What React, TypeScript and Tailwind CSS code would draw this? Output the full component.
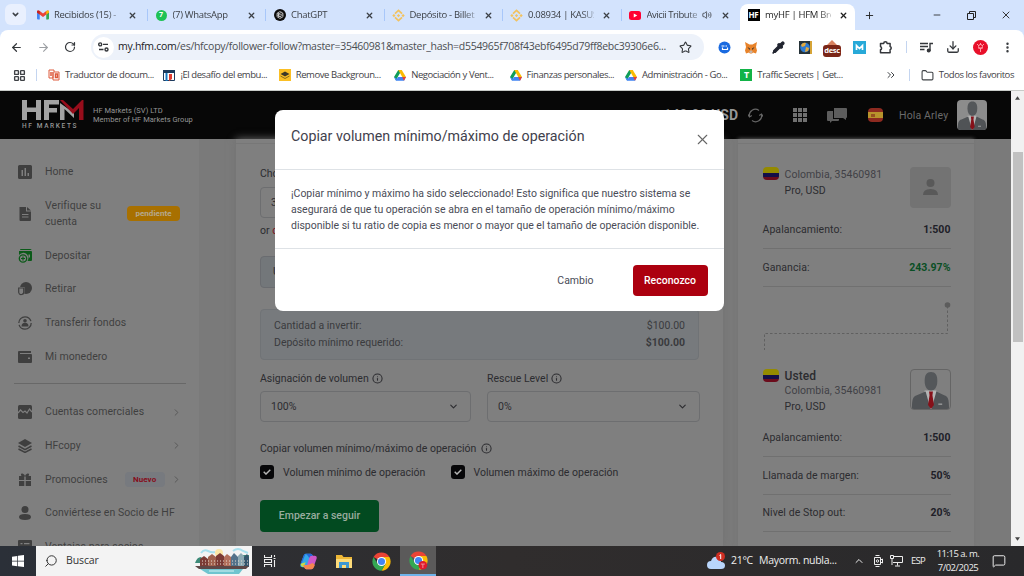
import { ReactNode } from "react";
import {
  ArrowLeft, ArrowRight, ChevronDown, ChevronRight, ChevronUp, ChevronsRight, Download, Folder, Info,
  LayoutGrid, MessageSquare, Minus, MoreVertical, Pipette, Plus, RotateCw, Search, Star, Volume2, X,
} from "lucide-react";

/* ---------- small logos ---------- */

function Gmail() {
  return (
    <svg width="12" height="10" viewBox="0 0 24 18">
      <path d="M0 2v14q0 2 2 2h3.500V7z" fill="#4285f4" />
      <path d="M24 2v14q0 2-2 2h-3.500V7z" fill="#34a853" />
      <path d="M0 2.500C0 0 3-1 5.500 1L12 6l6.500-5C21-1 24 0 24 2.500V4l-12 9L0 4z" fill="#ea4335" />
      <path d="M18.500 1v7L24 4V2.500C24 0 21-1 18.500 1z" fill="#fbbc04" />
      <path d="M5.500 1v7L0 4V2.500C0 0 3-1 5.500 1z" fill="#c5221f" />
    </svg>
  );
}

function Binance() {
  return (
    <svg width="13" height="13" viewBox="0 0 24 24" fill="none" stroke="#f2c260" strokeWidth="3.200">
      <path d="m5.500 8.500 6.500-6 6.500 6M5.500 15.500l6.500 6 6.500-6" />
      <path d="m12 9 3 3-3 3-3-3z" fill="#f2c260" stroke="none" />
      <path d="m3.500 9 3 3-3 3-3-3zM20.500 9l3 3-3 3-3-3z" fill="#f2c260" stroke="none" />
    </svg>
  );
}

function Drive() {
  return (
    <svg width="12" height="11" viewBox="0 0 24 22">
      <path d="M8.500 0h7L8 13 4.200 21 0 14z" fill="#0f9d58" />
      <path d="M8.500 0h7L24 14h-7.500z" fill="#fbbc04" />
      <path d="M0 14 4 21.500h16L24 14H8l-2 3.500z" fill="#4285f4" />
      <path d="M16.500 14H24l-4 7.500z" fill="#ea4335" />
    </svg>
  );
}

function Chrome({ badge }: { badge?: boolean }) {
  return (
    <svg width="19" height="19" viewBox="0 0 24 24">
      <path d="M12 12 2 6.200A11.600 11.600 0 0 1 22 6.200z" fill="#ea4335" />
      <path d="M12 12V6.200h10A11.600 11.600 0 0 1 12 23.600l5-8.700z" fill="#fbbc04" />
      <path d="M12 12 17 15l-5 8.600A11.600 11.600 0 0 1 2 6.200l5 8.700z" fill="#34a853" />
      <circle cx="12" cy="12" r="5.800" fill="#fff" />
      <circle cx="12" cy="12" r="4.500" fill="#4285f4" />
      {badge && (
        <>
          <circle cx="17.500" cy="18" r="5.500" fill="#e01b2c" />
          <path d="M15 16.500h5M17.500 16.500v5" stroke="#f7a5ac" strokeWidth="1" />
        </>
      )}
    </svg>
  );
}

function Swirl() {
  return (
    <svg width="12" height="12" viewBox="0 0 24 24">
      <circle cx="12" cy="12" r="12" fill="#0c0c0c" />
      <g fill="none" stroke="#d0d0d0" strokeWidth="1.500">
        <path d="m12 5 6 3.500v7L12 19l-6-3.500v-7z" />
        <path d="M9 6.500v7l6 3.500M15 6.500l-6 3.700v7M6 12l6 3.500 6-3.700M6 9l6 3 6-3" />
      </g>
    </svg>
  );
}

function Youtube() {
  return (
    <svg width="12" height="9" viewBox="0 0 24 18">
      <rect width="24" height="18" rx="5" fill="#f03" />
      <path d="m9.500 5 7 4-7 4z" fill="#fff" />
    </svg>
  );
}

/* ---------- browser chrome ---------- */

const tabs: { title: string; icon: ReactNode; audio?: boolean; active?: boolean }[] = [
  { title: "Recibidos (15) -", icon: <Gmail /> },
  {
    title: "(7) WhatsApp",
    icon: <span className="flex h-[11px] w-[11px] items-center justify-center rounded-full bg-[#1fc255] text-[7px] font-bold text-white">7</span>,
  },
  { title: "ChatGPT", icon: <Swirl /> },
  { title: "Depósito - Billet", icon: <Binance /> },
  { title: "0.08934 | KASUS", icon: <Binance /> },
  { title: "Avicii Tribute", icon: <Youtube />, audio: true },
  {
    title: "myHF | HFM Bro",
    icon: <span className="flex h-3 w-3 items-center justify-center bg-black text-[8px] font-bold tracking-[-0.300px] text-white">HF</span>,
    active: true,
  },
];

function TabStrip() {
  return (
    <div className="flex h-[30px] items-stretch bg-[#d3e3fd] text-[#3c4046]">
      <div className="w-[29px] pl-[5px] pt-1">
        <div className="flex h-[21px] w-[21px] items-center justify-center rounded-md bg-[#e9f0fe]">
          <ChevronDown size={9} strokeWidth={4} />
        </div>
      </div>
      {tabs.map((tab, i) => (
        <div
          key={tab.title}
          className={tab.active ? "flex w-[118px] pt-1" : "flex w-[118.500px] pt-1"}
        >
          <div
            className={
              tab.active
                ? "flex w-[115px] items-center rounded-t-lg bg-white pb-1 pl-[7px] text-[#1f1f1f]"
                : "flex w-full items-center pb-1 pl-[7px]"
            }
          >
            <span className="flex w-[13px] shrink-0 justify-center">{tab.icon}</span>
            <span
              className={
                tab.audio
                  ? "ml-[5px] w-[50px] whitespace-nowrap text-[9.500px] tracking-[-0.450px] [mask-image:linear-gradient(to_right,#000_80%,transparent_115%)]"
                  : "ml-[5px] w-[66px] whitespace-nowrap text-[9.500px] tracking-[-0.300px] [mask-image:linear-gradient(to_right,#000_80%,transparent_110%)]"
              }
            >
              {tab.title}
            </span>
            {tab.audio && <Volume2 size={10} className="ml-[5px] mr-px" />}
            <X size={9} strokeWidth={3.500} className="ml-2 shrink-0" />
          </div>
          {!tab.active && i !== 5 && <div className="mt-[5px] h-3 w-px bg-[#a8c7fa]" />}
        </div>
      ))}
      <div className="flex flex-1 items-center text-[#222]">
        <Plus size={11} className="ml-[6px]" />
        <Minus size={10} strokeWidth={2} className="ml-[57px]" />
        <svg className="ml-[25px]" width="9" height="9" viewBox="0 0 9 9" fill="none" stroke="currentColor">
          <path d="M.5 2.500h6v6h-6zM2.500 2.500v-2h6v6h-2" />
        </svg>
        <X size={12} strokeWidth={1.800} className="ml-[24px]" />
      </div>
    </div>
  );
}

const extensions: ReactNode[] = [
  <svg width="13" height="13" viewBox="0 0 13 13">
    <circle cx="6.500" cy="6.500" r="6" fill="#1a6ae0" />
    <path d="M3.500 5h3M9 5H7.500M9.500 6.500v2h-5v-2" fill="none" stroke="#fff" strokeWidth="1.200" />
  </svg>,
  <svg width="14" height="13" viewBox="0 0 28 26">
    <path d="m2 2 9 5h6l9-5-2 10 2 7-2 6-6-2-2 2h-4l-2-2-6 2-2-6 2-7z" fill="#e8832a" />
    <path d="m7 12 5 3-1 3zM21 12l-5 3 1 3z" fill="#35302c" />
    <path d="m11 21 1-2h4l1 2-1 3h-4z" fill="#c6b3a4" />
  </svg>,
  <Pipette size={13} fill="#20242f" color="#20242f" strokeWidth={2.500} />,
  <svg width="13" height="13" viewBox="0 0 13 13">
    <rect width="13" height="13" fill="#263238" />
    <circle cx="6" cy="6.500" r="4.800" fill="#2f7bd1" />
    <path d="M2 4q2-3 5-2l-1 3-3 1zM7 6l3 1-1 3-3 1z" fill="#e5a93a" />
    <path d="M11 0h2v13h-2z" fill="#d6a437" />
  </svg>,
  <span className="flex flex-col items-center pt-[3px]">
    <svg width="12" height="5" viewBox="0 0 12 6"><path d="m6 0 6 6H0z" fill="#d9825f" /></svg>
    <span className="flex h-[12px] w-[18px] items-center justify-center rounded-[3px] bg-[#7b2617] pb-px text-[7.500px] font-bold leading-none tracking-[-0.300px] text-white">desc</span>
  </span>,
  <svg width="13" height="13" viewBox="0 0 13 13">
    <rect width="13" height="13" fill="#27a9d8" />
    <path d="M3.500 9V4.500l3 3 3-3V9" fill="none" stroke="#fff" strokeWidth="1.700" />
  </svg>,
  <svg width="14" height="14" viewBox="0 0 14 14" fill="none" stroke="currentColor" strokeWidth="1.500" strokeLinejoin="round">
    <path d="M1.500 3.500h3.200a1.700 1.700 0 0 1 3.400 0h3v3a1.700 1.700 0 0 1 0 3.200v3H1.500V9.800a1.800 1.800 0 0 0 0-3.300z" />
  </svg>,
];

function Toolbar() {
  return (
    <div className="flex h-[34px] items-center rounded-t-lg bg-white text-[#34373b]">
      <ArrowLeft size={13} strokeWidth={2.200} className="ml-[10px]" />
      <ArrowRight size={13} className="ml-[14px] text-[#9c9fa3]" />
      <RotateCw size={12} strokeWidth={2.400} className="ml-[14px]" />
      <div className="ml-[15px] flex h-[26px] w-[613px] items-center rounded-full bg-[#edf2fa] pl-[2px]">
        <span className="flex h-[21px] w-[21px] shrink-0 items-center justify-center rounded-full bg-white">
          <svg width="11" height="10" viewBox="0 0 11 10" fill="none" stroke="currentColor" strokeWidth="1.400">
            <circle cx="2.200" cy="2.400" r="1.500" />
            <path d="M5 2.400h5M1 7.500h4.500" />
            <circle cx="8.500" cy="7.500" r="1.500" />
          </svg>
        </span>
        <span className="ml-1 w-[549px] shrink-0 whitespace-nowrap text-[10.500px] tracking-[-0.280px] text-[#4b4e52]">
          <span className="text-[#202124]">my.hfm.com</span>
          /es/hfcopy/follower-follow?master=35460981&amp;master_hash=d554965f708f43ebf6495d79ff8ebc39306e6...
        </span>
        <Star size={13} className="ml-[12px] shrink-0" />
      </div>
      <div className="ml-[6.500px] flex">
        {extensions.map((icon, i) => (
          <span key={i} className="flex h-5 w-[27px] items-center justify-center">{icon}</span>
        ))}
      </div>
      <div className="ml-[6px] mr-[6px] h-3 w-px bg-[#c4d5f0]" />
      <span className="flex w-[27px] justify-center">
        <svg width="13" height="11" viewBox="0 0 13 11" fill="none" stroke="currentColor" strokeWidth="1.400">
          <path d="M0 1.500h8M0 4.500h8M0 7.500h4.500M10 9V1.500h3" />
          <circle cx="8.700" cy="8.600" r="1.300" fill="currentColor" />
        </svg>
      </span>
      <span className="flex w-[27px] justify-center"><Download size={14} strokeWidth={2.200} /></span>
      <span className="flex w-[27px] justify-center">
        <svg width="15" height="15" viewBox="0 0 15 15">
          <circle cx="7.500" cy="7.500" r="7.500" fill="#e8102a" />
          <path d="M7.500 12V8M5 8h5M4 4l2 2M11 4 9 6M7.500 3v2" stroke="#ff9aa4" />
          <circle cx="7.500" cy="6.500" r="2" fill="none" stroke="#ff9aa4" />
        </svg>
      </span>
      <span className="flex w-[27px] justify-center"><MoreVertical size={13} strokeWidth={2.500} /></span>
    </div>
  );
}

const bookmarks: { title: string; icon: ReactNode }[] = [
  {
    title: "Traductor de docum...",
    icon: (
      <svg width="12" height="12" viewBox="0 0 12 12" fill="none" stroke="#dd5a3c">
        <path d="M1 1h5v2h5v8H5V9H1z" />
        <path d="M3 3v4M5 3v6M7.500 5h2v3.500h-2z" strokeWidth="1.500" />
      </svg>
    ),
  },
  {
    title: "¡El desafío del embu...",
    icon: (
      <svg width="12" height="11" viewBox="0 0 12 11">
        <path d="M.5.5h11v10H.5z" fill="#fff" stroke="#1c3b5e" />
        <path d="M0 0h12v3H0z" fill="#1c3b5e" />
        <path d="M2.500 3h2v8h-2z" fill="#1878c0" />
        <path d="M6 4h3v5l-3 2z" fill="#e03c31" />
      </svg>
    ),
  },
  {
    title: "Remove Backgroun...",
    icon: (
      <svg width="12" height="12" viewBox="0 0 12 12">
        <path d="M0 0h12v12H0z" fill="#fbbf24" />
        <path d="m6 2.500 4.500 2.500L6 7.500 1.500 5z" fill="#3c3828" />
        <path d="m1.500 7 4.500 2.500L10.500 7" fill="none" stroke="#8a6d1c" />
      </svg>
    ),
  },
  { title: "Negociación y Vent...", icon: <Drive /> },
  { title: "Finanzas personales...", icon: <Drive /> },
  { title: "Administración - Go...", icon: <Drive /> },
  {
    title: "Traffic Secrets | Get...",
    icon: <span className="flex h-3 w-3 items-center justify-center bg-[#12b347] text-[9px] font-bold text-white">T</span>,
  },
];

function Bookmarks() {
  return (
    <div className="flex h-[26px] items-center bg-white pb-1 text-[9.500px] tracking-[-0.430px] text-[#3f4246]">
      <LayoutGrid size={13} strokeWidth={2.500} className="ml-[13px]" />
      <div className="ml-[10px] mr-[11px] h-3 w-px bg-[#c4d5f0]" />
      {bookmarks.map((b) => (
        <div key={b.title} className="flex w-[115.400px] items-center gap-[5px] whitespace-nowrap">
          <span className="flex w-3 shrink-0 justify-center">{b.icon}</span>
          {b.title}
        </div>
      ))}
      <ChevronsRight size={12} className="ml-[29px]" />
      <div className="ml-[12px] mr-[11px] h-3 w-px bg-[#c4d5f0]" />
      <Folder size={13} />
      <span className="ml-[5px] whitespace-nowrap">Todos los favoritos</span>
    </div>
  );
}

/* ---------- page ---------- */

function Person({ className }: { className: string }) {
  return (
    <svg className={className} viewBox="0 0 40 40">
      <path d="M14 21h12l1 19H13z" fill="#b4b4b4" />
      <path d="M14 11c0-6 2-9 6.500-9S27 5 27 11c0 7-3 10-6.500 10S14 18 14 11z" fill="#54575a" />
      <path d="M15 22 20 40H1c0-10 1-13 5-14zM26 22l-5 18h18c0-10-1-13-5-14z" fill="#505356" />
      <path d="m18.500 22h4l-.5 4 1.500 10-3 4-3-4L19 26z" fill="#861019" />
      <path d="M28 35h4" stroke="#bbb" />
    </svg>
  );
}

function Header() {
  return (
    <header className="flex h-12 items-center bg-[#070707] text-[#969696]">
      <div className="ml-[22px] w-[64px]">
        <svg width="62" height="20" viewBox="0 0 62 20">
          <path d="M0 0h5v7.500h9V0h5v20h-5v-8H5v8H0zM22 0h15v4.500H27V8h8v4.500h-8V20h-5z" fill="#a2a2a2" />
          <path d="M38 3v17h4.500V9L52 18V13z" fill="#a2a2a2" />
          <path d="M38 0h3l10 9L60 0h1.500v20H57V8l-6 6z" fill="#970d1b" />
        </svg>
        <div className="mt-[3px] whitespace-nowrap text-[6.500px] font-medium leading-[7px] tracking-[1.650px]">HF MARKETS</div>
      </div>
      <div className="ml-[7px] w-[200px] whitespace-nowrap text-[7.500px] leading-[9px] tracking-[0.030px]">
        HF Markets (SV) LTD
        <br />
        Member of HF Markets Group
      </div>
      <div className="ml-auto flex items-center">
        <span className="whitespace-nowrap text-[14px] font-bold">140.00 USD</span>
        <svg className="ml-[10px]" width="15" height="15" viewBox="0 0 15 15" fill="none" stroke="#666" strokeWidth="1.200">
          <path d="M1.500 8.500A6 6 0 0 1 11 2.500M13.500 6.500A6 6 0 0 1 4 12.500M0 6.500l1.500 2.500 2.300-1.500M15 8.500 13.500 6l-2.300 1.500" />
        </svg>
        <svg className="ml-[30px]" width="14" height="14" viewBox="0 0 14 14" fill="#707070">
          <path d="M0 0h4v4H0zM5 0h4v4H5zM10 0h4v4h-4zM0 5h4v4H0zM5 5h4v4H5zM10 5h4v4h-4zM0 10h4v4H0zM5 10h4v4H5zM10 10h4v4h-4z" />
        </svg>
        <svg className="ml-[20px]" width="20" height="15" viewBox="0 0 20 15" fill="#5d5d5d">
          <path d="M7 0h12q1 0 1 1v8q0 1-1 1v2l-3-2H7z" />
          <path d="M1 3h5v8h6v1q0 1-1 1H5l-2 2v-2H1q-1 0-1-1V4q0-1 1-1z" />
        </svg>
        <div className="ml-[21px] flex h-[14px] w-[15px] flex-col overflow-hidden rounded-sm">
          <div className="h-1 bg-[#8d2a20]" />
          <div className="flex flex-1 items-center bg-[#b8932c] pl-[3px]"><div className="h-[3px] w-1 bg-[#96521f]" /></div>
          <div className="h-1 bg-[#8d2a20]" />
        </div>
        <span className="ml-4 w-[51px] whitespace-nowrap pt-px text-[10.500px] tracking-[0.150px] text-[#6a6a6a]">Hola Arley</span>
        <Person className="ml-[7px] mr-[24px] h-[30px] w-[30px] rounded bg-[#8c8c8c]" />
      </div>
    </header>
  );
}

function SideIcon({ name }: { name: string }) {
  const paths: Record<string, ReactNode> = {
    home: <path fillRule="evenodd" d="M1.500 0h11q1.500 0 1.500 1.500v11q0 1.500-1.500 1.500h-11Q0 14 0 12.500v-11Q0 0 1.500 0zM3.500 5v6H5V5zM6.500 3v8H8V3zM9.500 8v3H11V8z" />,
    doc: <path fillRule="evenodd" d="M1.500 0H8v4.500h5V13q0 1-1 1H2.500q-1 0-1-1zM9 0l4 3.500H9zM4 7v1h6.500V7zM4 9.500v1h6.500v-1z" />,
    deposit: (
      <g fill="#0b5a19">
        <path d="M3 0h9q1.500 0 1.500 1H2q0-1 1-1zM1 2h12q1 0 1 1v8q0 1-1 1H9.500A4.600 4.600 0 0 0 1 6z" />
        <circle cx="5" cy="9.500" r="3.700" fill="#7f7f7f" stroke="#0b5a19" strokeWidth="1.300" />
        <path d="M4.400 7.500h1.200v1.400H7v1.200H5.600v1.400H4.400v-1.400H3V8.900h1.400z" />
        <path d="M10.500 5.500H12v3h-1.500z" fill="#7f7f7f" />
      </g>
    ),
    withdraw: (
      <>
        <circle cx="8" cy="6" r="6" />
        <path d="M0 5h6.500v5A3.200 3.200 0 0 1 0 10z" fill="#7f7f7f" />
        <path d="M.7 6h5v3.500a2.500 2.500 0 0 1-5 1z" fill="none" stroke="#3f3f3f" strokeWidth="1.200" />
      </>
    ),
    transfer: (
      <>
        <circle cx="7" cy="7" r="6.200" fill="none" stroke="#3f3f3f" strokeWidth="1.300" strokeDasharray="17 2" />
        <circle cx="7" cy="4.800" r="1.800" />
        <path d="M3.500 10.500q0-3.700 3.500-3.700t3.500 3.700z" />
      </>
    ),
    wallet: <path fillRule="evenodd" d="M1 1h12v2H2v1h11q1 0 1 1v7q0 1-1 1H1q-1 0-1-1V2q0-1 1-1zM10 7.500V9h2V7.500z" />,
    chart: (
      <>
        <rect width="14" height="14" rx="1.500" />
        <path d="m0 8 2.500-3L5 7.500l2-1.500 2 2 2.500-4L14 7" fill="none" stroke="#7f7f7f" strokeWidth="1.200" />
      </>
    ),
    layers: (
      <>
        <path d="m7 0 7 4-7 4-7-4z" />
        <path d="m.5 7 6.500 3.600L13.500 7M.5 10 7 13.400 13.500 10" fill="none" stroke="#3f3f3f" strokeWidth="1.500" />
      </>
    ),
    gift: <path d="M1 3h2.500Q2 0 4.500.5 6.500 1 7 3q.5-2 2.500-2.500Q12 0 10.500 3H13v4H7.700V3.500H6.300V7H1zM1 8h5.300v5H1zM7.700 8H13v5H7.700z" />,
    user: (
      <>
        <circle cx="7" cy="3.500" r="3.500" />
        <path d="M1 11q0-3 6-3t6 3q0 3-6 3t-6-3z" />
      </>
    ),
    news: <path fillRule="evenodd" d="M1 0h12q1 0 1 1v12H0V1q0-1 1-1zM2.500 3v1.200h2V3zM6 3v1.200h5.500V3zM2.500 6v1h9V6z" />,
  };
  return <svg width="14" height="14" viewBox="0 0 14 14" fill="#3f3f3f" className="shrink-0">{paths[name]}</svg>;
}

function SideItem({ icon, label, arrow, badge }: { icon: string; label: string; arrow?: boolean; badge?: string }) {
  return (
    <div className="flex h-[33.700px] shrink-0 items-center pl-[18px]">
      <SideIcon name={icon} />
      <span className="ml-[13px] whitespace-nowrap">{label}</span>
      {badge && (
        <span className="ml-[17px] flex h-[15px] w-10 items-center justify-center rounded bg-[#777a7f] text-[8px] font-bold text-[#860d1b]">
          {badge}
        </span>
      )}
      {arrow && <ChevronRight size={11} className="ml-auto mr-[17px] text-[#555]" />}
    </div>
  );
}

function Sidebar() {
  return (
    <aside className="flex w-[199px] shrink-0 flex-col overflow-hidden bg-[#7f7f7f] pt-4 text-[10.500px] tracking-[0.050px] text-[#3f3f3f]">
      <SideItem icon="home" label="Home" />
      <div className="flex h-[50px] shrink-0 items-center pl-[18px]">
        <SideIcon name="doc" />
        <span className="ml-[13px] w-[82px] pr-4 leading-4">Verifique su cuenta</span>
        <span className="flex h-[15px] w-[53px] items-center justify-center rounded bg-[#a87000] text-[8px] font-bold text-[#b5a98e]">pendiente</span>
      </div>
      <SideItem icon="deposit" label="Depositar" />
      <SideItem icon="withdraw" label="Retirar" />
      <SideItem icon="transfer" label="Transferir fondos" />
      <SideItem icon="wallet" label="Mi monedero" />
      <div className="mb-[11px] ml-[14px] mt-[10px] h-px w-[172px] shrink-0 bg-[#686868]" />
      <SideItem icon="chart" label="Cuentas comerciales" arrow />
      <SideItem icon="layers" label="HFcopy" arrow />
      <SideItem icon="gift" label="Promociones" badge="Nuevo" arrow />
      <SideItem icon="user" label="Conviértese en Socio de HF" />
      <SideItem icon="news" label="Ventajas para socios" />
    </aside>
  );
}

function SelectBox({ value }: { value: string }) {
  return (
    <div className="flex h-[31px] items-center rounded border border-[#6d6e70] pl-[10px] pr-[11px]">
      <span>{value}</span>
      <ChevronDown size={11} strokeWidth={2.500} className="ml-auto" />
    </div>
  );
}

function Check({ label }: { label: string }) {
  return (
    <label className="flex items-center">
      <span className="flex h-[14px] w-[14px] items-center justify-center rounded-[3px] bg-[#070709]">
        <svg width="8" height="6" viewBox="0 0 8 6" fill="none" stroke="#b5b5b5" strokeWidth="1.400"><path d="m.7 2.800 2.300 2.300L7.300.7" /></svg>
      </span>
      <span className="ml-[9px] pt-px">{label}</span>
    </label>
  );
}

function FollowForm() {
  return (
    <section className="flex h-full w-[487px] shrink-0 flex-col bg-[#7f7f7f] px-6 text-[10.500px] text-[#2c2c30] shadow-[0_0_8px_#727272]">
      <div className="-mx-6 h-[5px] shrink-0 border-b border-[#777]" />
      <div className="mt-[22px] h-4 leading-4">Choose account</div>
      <div className="mt-[5px] w-[211px]"><SelectBox value="35460981" /></div>
      <div className="mt-[5px] h-4 leading-4">or <span className="text-[#7c1019]">create a new account</span></div>
      <div className="mt-[17px] flex h-8 w-[211px] items-center rounded border border-[#6a6c70] bg-[#73777a] pl-3">USD</div>
      <div className="mt-[21px] h-[51px] shrink-0 rounded border border-[#707376] bg-[#777a7d] px-[13px] pt-[7px] text-[#3a3b3e]">
        <div className="flex h-[17.500px] items-center justify-between"><span>Cantidad a invertir:</span><span>$100.00</span></div>
        <div className="flex h-[17.500px] items-center justify-between"><span>Depósito mínimo requerido:</span><b>$100.00</b></div>
      </div>
      <div className="mt-[10px] grid grid-cols-[211px_213px] gap-x-4">
        <div>
          <div className="mb-[4px] flex h-[17px] items-center gap-[3px]">Asignación de volumen <Info size={11} strokeWidth={2.300} /></div>
          <SelectBox value="100%" />
        </div>
        <div>
          <div className="mb-[4px] flex h-[17px] items-center gap-[3px]">Rescue Level <Info size={11} strokeWidth={2.300} /></div>
          <SelectBox value="0%" />
        </div>
      </div>
      <div className="mt-[18px] flex h-[17px] items-center gap-[5px]">Copiar volumen mínimo/máximo de operación <Info size={11} strokeWidth={2.300} /></div>
      <div className="mt-[7px] grid grid-cols-[190.500px_1fr]">
        <Check label="Volumen mínimo de operación" />
        <Check label="Volumen máximo de operación" />
      </div>
      <button className="mt-[19px] h-8 w-[119px] shrink-0 rounded bg-[#024a20] pt-px text-[10.500px] font-medium text-[#9aac9f]">Empezar a seguir</button>
    </section>
  );
}

function Flag() {
  return (
    <div className="flex h-[13px] w-4 shrink-0 flex-col overflow-hidden rounded-sm">
      <div className="h-[6px] bg-[#948a00]" />
      <div className="h-[4px] bg-[#140e48]" />
      <div className="flex-1 bg-[#6b0c1c]" />
    </div>
  );
}

function Stat({ label, value, green }: { label: string; value: string; green?: boolean }) {
  return (
    <div className="flex h-[37.500px] shrink-0 items-center justify-between border-b border-[#707070] pt-px">
      <span>{label}</span>
      <b className={green ? "text-[#0a4f25]" : "text-[#202028]"}>{value}</b>
    </div>
  );
}

function AccountCard() {
  return (
    <section className="ml-[15px] flex h-full w-[236px] shrink-0 flex-col bg-[#7f7f7f] pl-[24.500px] pr-[23.500px] text-[10.500px] tracking-[0.060px] text-[#2c2c30] shadow-[0_0_4px_#757575]">
      <div className="-ml-[24.500px] -mr-[23.500px] h-[5px] shrink-0 border-b border-[#777]" />
      <div className="mt-[22.500px] flex h-[45px] shrink-0">
        <Flag />
        <div className="ml-[6px] leading-4">
          <div className="text-[#414146]">Colombia, 35460981</div>
          <div>Pro, USD</div>
        </div>
        <div className="ml-auto flex h-[41px] w-[41px] items-center justify-center rounded bg-[#737373]">
          <svg width="15" height="16" viewBox="0 0 15 16" fill="#595959"><circle cx="7.500" cy="4" r="4" /><path d="M0 16q0-6 7.500-6T15 16z" /></svg>
        </div>
      </div>
      <Stat label="Apalancamiento:" value="1:500" />
      <Stat label="Ganancia:" value="243.97%" green />
      <svg className="mt-[14px] shrink-0" width="188" height="49" viewBox="0 0 188 49">
        <path d="M184.500 5v27.500H1.500V49" fill="none" stroke="#606060" strokeDasharray="2.500 2" />
        <circle cx="184.500" cy="4" r="2.800" fill="#5c5c5c" />
      </svg>
      <div className="mt-[19px] flex h-[51px] shrink-0">
        <Flag />
        <div className="ml-[6px] leading-4">
          <div className="text-[12px] font-medium leading-[14px]">Usted</div>
          <div className="text-[#414146]">Colombia, 35460981</div>
          <div>Pro, USD</div>
        </div>
        <Person className="ml-auto h-[41px] w-[41px] rounded border border-[#656565] bg-[#7f7f7f]" />
      </div>
      <Stat label="Apalancamiento:" value="1:500" />
      <Stat label="Llamada de margen:" value="50%" />
      <Stat label="Nivel de Stop out:" value="20%" />
    </section>
  );
}

function Modal() {
  return (
    <div role="dialog" className="absolute left-[275px] top-[19px] flex h-[201px] w-[448.500px] flex-col rounded-lg bg-white text-[#4a4c57]">
      <div className="flex h-[60px] justify-between border-b border-[#dee2e6] px-4 pt-4">
        <h2 className="whitespace-nowrap text-[14.250px] leading-5 text-[#3f414d]">Copiar volumen mínimo/máximo de operación</h2>
        <X size={17} strokeWidth={1.500} className="-mr-[3px] mt-[5px] text-[#666]" />
      </div>
      <p className="h-[79px] whitespace-nowrap border-b border-[#dee2e6] px-4 pt-4 text-[10.500px] leading-[15.800px] tracking-[-0.010px]">
        ¡Copiar mínimo y máximo ha sido seleccionado! Esto significa que nuestro sistema se
        <br />
        asegurará de que tu operación se abra en el tamaño de operación mínimo/máximo
        <br />
        disponible si tu ratio de copia es menor o mayor que el tamaño de operación disponible.
      </p>
      <div className="flex flex-1 items-center justify-end pr-4 pt-px text-[10.500px]">
        <button className="mr-[39px]">Cambio</button>
        <button className="h-[31px] w-[75px] rounded bg-[#ac000f] font-medium text-white">Reconozco</button>
      </div>
    </div>
  );
}

function Scrollbar() {
  return (
    <div className="flex w-[13px] shrink-0 flex-col items-center bg-[#f1f1f1] py-[5px]">
      <svg width="5" height="4" viewBox="0 0 6 4"><path d="m3 0 3 4H0z" fill="#444" /></svg>
      <div className="mt-[52px] h-[190px] w-[10px] bg-[#c1c1c1]" />
      <svg className="mt-auto" width="5" height="4" viewBox="0 0 6 4"><path d="M3 4 0 0h6z" fill="#444" /></svg>
    </div>
  );
}

/* ---------- taskbar ---------- */

function Taskbar() {
  return (
    <footer className="flex h-[30px] items-center bg-gradient-to-r from-[#2b3038] via-[#302d2d] to-[#29292b] text-[#eee]">
      <svg className="ml-3" width="12" height="12" viewBox="0 0 12 12" fill="#fff">
        <path d="m0 1.700 5.300-.8v4.800H0zM6 .8 12 0v5.700H6zM0 6.400h5.300v4.800L0 10.400zM6 6.400h6V12l-6-.8z" />
      </svg>
      <div className="ml-3 flex h-full w-[216px] items-center bg-[#f3f3f3] pl-2 text-[#333]">
        <Search size={14} strokeWidth={1.700} className="-scale-x-100" />
        <span className="ml-2 text-[10.500px] tracking-[-0.100px]">Buscar</span>
        <svg className="ml-auto mr-[2px]" width="55" height="28" viewBox="0 0 55 28">
          <path d="M6 6q3-4 7-2t7 1M38 4q5-4 10 0l5 2" stroke="#a8e0ee" strokeWidth="2" fill="none" />
          <circle cx="24" cy="6" r="4" fill="#fbe6a6" />
          <path d="M0 16q2-6 6-6l5 6zM46 8h8v12h-8z" fill="#3d8a78" />
          <path d="M5 12l4-3 4 3v8H5zM21 9l4-3 4 3v11h-8z" fill="#7b3b35" />
          <path d="M13 10l4-3 4 3v10h-8z" fill="#a0614d" />
          <path d="M29 10l3-3 4 3v10h-7z" fill="#b3705c" />
          <path d="M36 10l3-4 4 4v10h-7z" fill="#53728a" />
          <path d="M43 9l3-3 3 3v11h-6z" fill="#8ba9b3" />
          <path d="M49 10l3-3 2 3v10h-5z" fill="#34566c" />
          <path d="M7 14h46M7 17h46" stroke="#e8ddd2" strokeWidth="1" strokeDasharray="1 2" />
          <path d="M0 19h54l-3 3H4z" fill="#5d4746" />
          <path d="M5 22h43l-4 5H13z" fill="#6fc5cf" />
          <path d="M14 24h25" stroke="#d5f2f4" />
        </svg>
      </div>
      <svg className="ml-3" width="12" height="12" viewBox="0 0 12 12" fill="none" stroke="#eee" strokeWidth="1.100">
        <path d="M.5 0v2.500h7V0M.5 12V9.500h7V12M.5 4.500h7v3h-7zM10.500 0v2M10.500 5v7M9.500 3.500h2" />
      </svg>
      <svg className="ml-[24px]" width="17" height="17" viewBox="0 0 24 24">
        <path d="M8 1h7q2 0 3 3l1 3h-5l-3 10q-1 3-4 3H3q-4 0-2-5L5 4q1-3 3-3z" fill="#35a7e8" />
        <path d="M8 1h7q2 0 3 3l1 3h-6l-2-3-3-3-6 14-1-1L5 4q1-3 3-3z" fill="#2565d8" />
        <path d="M1 15q0 4 4 5l3-7z" fill="#c9dc45" />
        <path d="M16 23H9q-2 0-3-3l-1-3h5l3-10q1-3 4-3h4q4 0 2 5l-4 11q-1 3-3 3z" fill="#cd58c7" />
        <path d="M16 23H9q-2 0-3-3l-1-3h6l7-3 3 3q-2 6-5 6z" fill="#f48650" />
      </svg>
      <svg className="ml-[18px]" width="18" height="15" viewBox="0 0 18 15">
        <path d="M1 1h6l1.500 2H17v11H1z" fill="#eeb837" />
        <path d="M1 5h16v9H1z" fill="#fddb79" />
        <path d="M4 8h10v6h-3v-3H7v3H4z" fill="#3d97d3" />
      </svg>
      <span className="ml-[19px]"><Chrome /></span>
      <div className="ml-[9px] flex h-full w-9 items-center justify-center border-b-2 border-[#6fb3ea] bg-[#5b5a5a]"><Chrome badge /></div>
      <div className="ml-auto flex items-center">
        <svg width="19" height="18" viewBox="0 0 19 18">
          <path d="M4 17q-4 0-4-4t4-4q2-5 6-4 4 1 4 5 4 0 4 3.500T14 17z" fill="#b9d5fb" />
          <circle cx="13.500" cy="4.500" r="4.500" fill="#cf2e22" />
          <path d="m12.500 3.500 1.200-1V7" fill="none" stroke="#fff" />
        </svg>
        <span className="ml-[5px] w-[28px] whitespace-nowrap text-[10.500px] tracking-[-0.300px]">21°C</span>
        <span className="w-[94px] whitespace-nowrap text-[10.500px] tracking-[-0.300px]">Mayorm. nubla...</span>
        <ChevronUp size={12} strokeWidth={2} />
        <svg className="ml-[9px]" width="9" height="12" viewBox="0 0 9 12" fill="none" stroke="#eee">
          <path d="M.5 2.500h6v7h-6zM6.500 5l2-1v4l-2-1M1.500.5h4M1.500 11.500h4" />
          <circle cx="3.500" cy="6" r="1.200" />
        </svg>
        <svg className="ml-[7px]" width="13" height="12" viewBox="0 0 13 12" fill="none" stroke="#eee">
          <path d="M4 1.500h8.500v6H3M7.500 7.500v3M5 11h5M.5.500h3v3h-3zM2 4v6" />
        </svg>
        <span className="ml-[8px] w-[22px] text-[9.500px] tracking-[-0.700px]">ESP</span>
        <div className="w-[50px] whitespace-nowrap text-center text-[9.500px] leading-[14px] tracking-[-0.500px]">
          11:15 a. m.
          <br />
          7/02/2025
        </div>
        <MessageSquare size={14} strokeWidth={1.700} className="ml-[9px] mr-[18px]" />
      </div>
    </footer>
  );
}

export default function App() {
  return (
    <div className="h-[576px] w-[1024px] overflow-hidden bg-[#d3e3fd] font-['Open_Sans','Noto_Sans',sans-serif]">
      <TabStrip />
      <Toolbar />
      <Bookmarks />
      <div className="flex h-[456px] border-t border-[#c8cbc8] font-['Roboto',sans-serif]">
        <main className="relative w-[1011px] shrink-0 overflow-hidden bg-[#7a7a7a]">
          <Header />
          <div className="flex h-[407px]">
            <Sidebar />
            <div className="ml-[37px] flex">
              <FollowForm />
              <AccountCard />
            </div>
          </div>
          <Modal />
        </main>
        <Scrollbar />
      </div>
      <Taskbar />
    </div>
  );
}
